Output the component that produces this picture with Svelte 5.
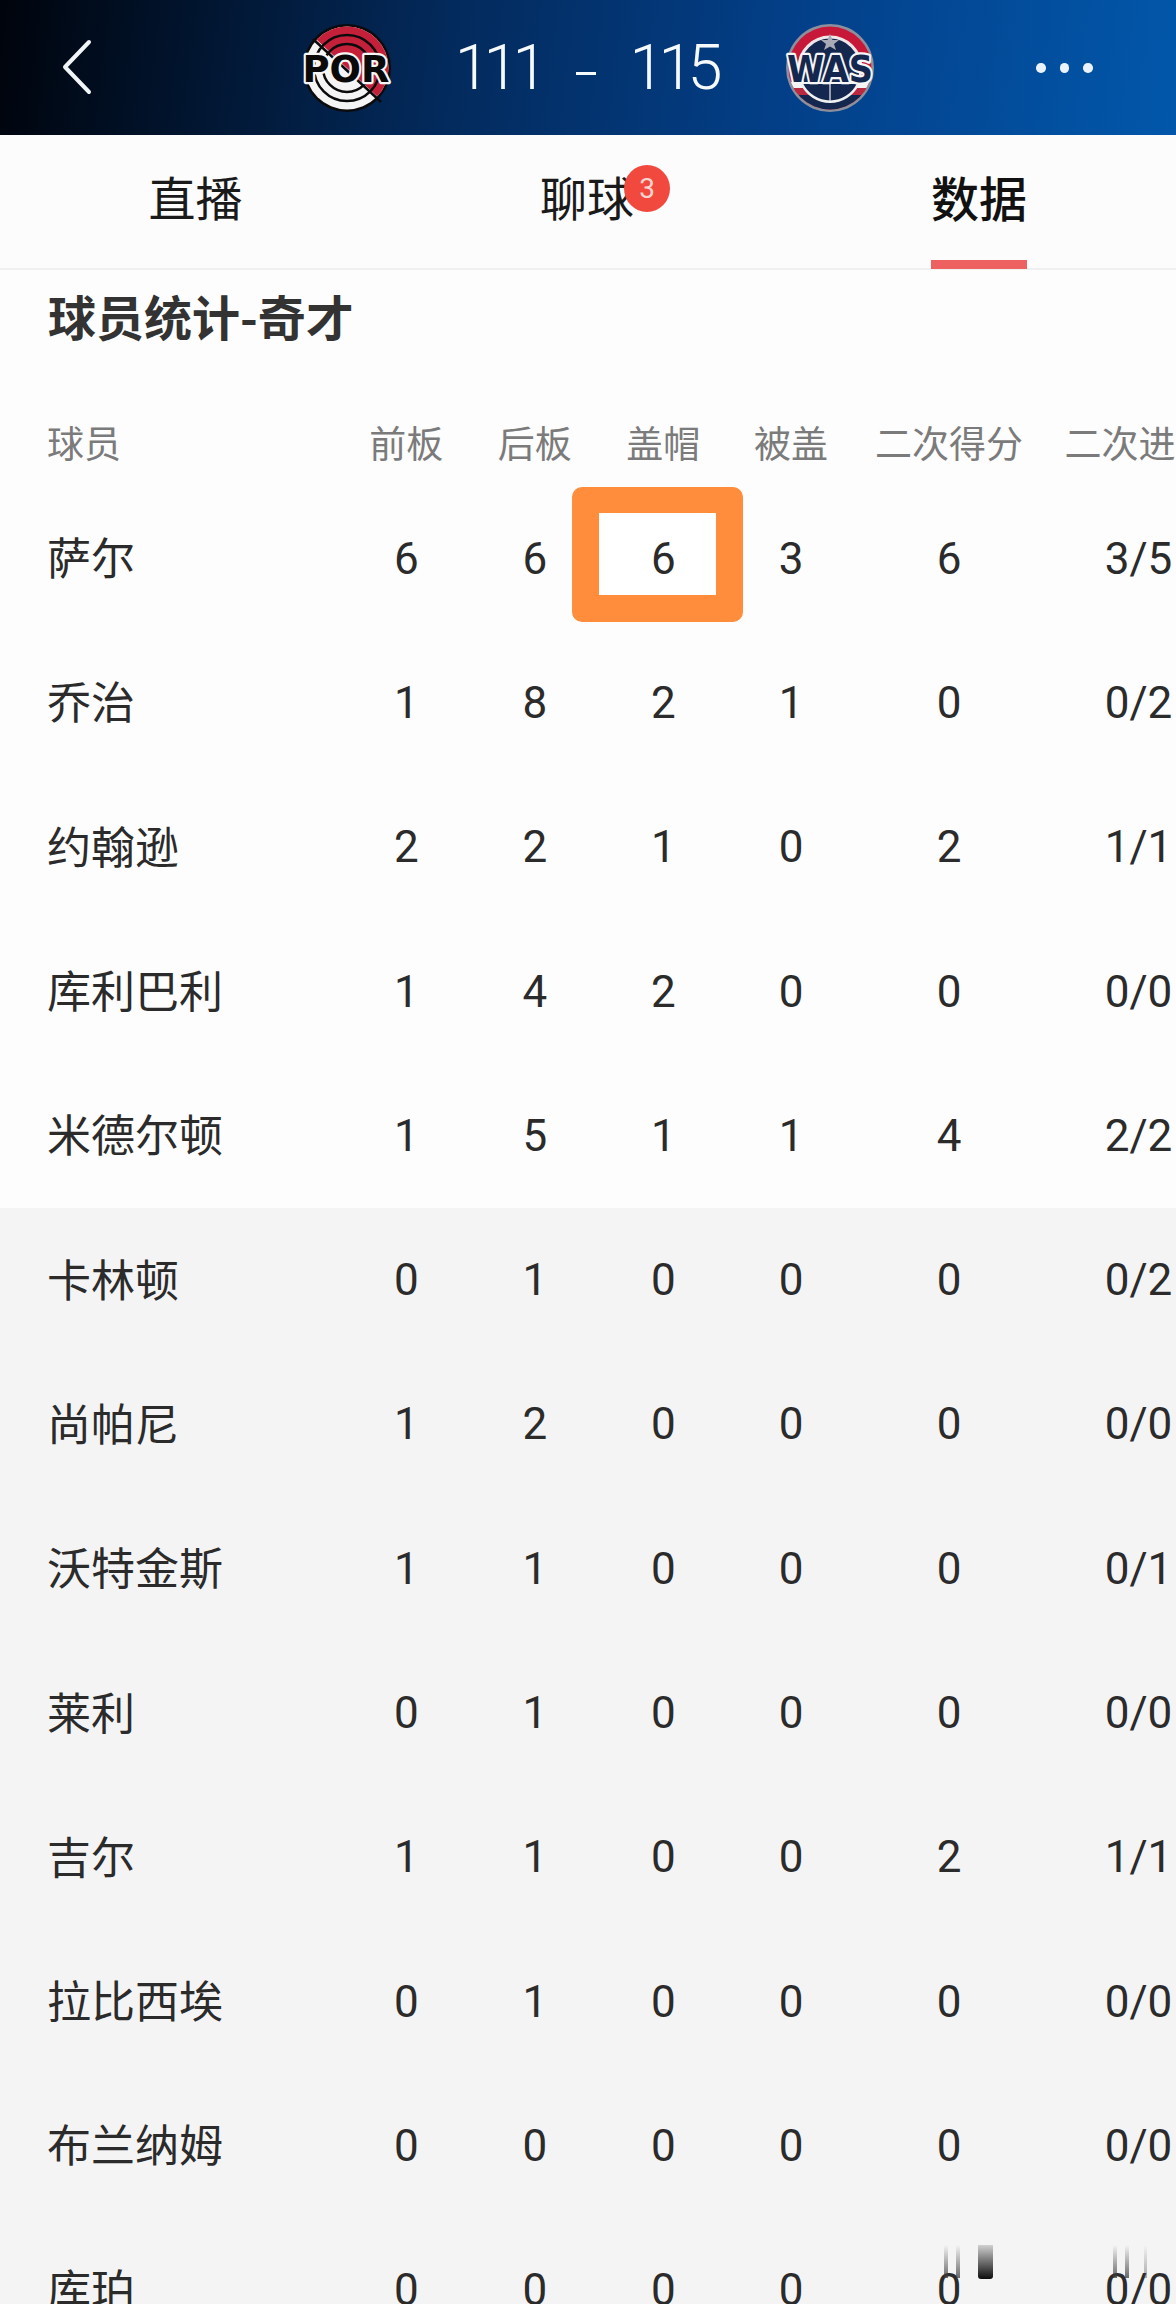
<script lang="ts">
	const columns = ['前板', '后板', '盖帽', '被盖', '二次得分', '二次进球'];

	const players = [
		{ name: '萨尔', stats: ['6', '6', '6', '3', '6', '3/5'] },
		{ name: '乔治', stats: ['1', '8', '2', '1', '0', '0/2'] },
		{ name: '约翰逊', stats: ['2', '2', '1', '0', '2', '1/1'] },
		{ name: '库利巴利', stats: ['1', '4', '2', '0', '0', '0/0'] },
		{ name: '米德尔顿', stats: ['1', '5', '1', '1', '4', '2/2'] },
		{ name: '卡林顿', stats: ['0', '1', '0', '0', '0', '0/2'] },
		{ name: '尚帕尼', stats: ['1', '2', '0', '0', '0', '0/0'] },
		{ name: '沃特金斯', stats: ['1', '1', '0', '0', '0', '0/1'] },
		{ name: '莱利', stats: ['0', '1', '0', '0', '0', '0/0'] },
		{ name: '吉尔', stats: ['1', '1', '0', '0', '2', '1/1'] },
		{ name: '拉比西埃', stats: ['0', '1', '0', '0', '0', '0/0'] },
		{ name: '布兰纳姆', stats: ['0', '0', '0', '0', '0', '0/0'] },
		{ name: '库珀', stats: ['0', '0', '0', '0', '0', '0/0'] }
	];

	// first five players are the starters, the rest sit on the grey background
	const starters = 5;
</script>

<div class="page">
	<header class="topbar">
		<svg class="back" width="32" height="56" viewBox="0 0 32 56">
			<path d="M28 3 L4 28 L28 53" fill="none" stroke="#f2f5f8" stroke-width="4" stroke-linecap="round" stroke-linejoin="round" />
		</svg>

		<div class="scoreline">
			<svg class="logo" width="92" height="92" viewBox="0 0 92 92">
				<defs>
					<clipPath id="por-top"><polygon points="0,0 92,0 92,78 80,78 16,18 10,0" /></clipPath>
				</defs>
				<circle cx="46" cy="46" r="44" fill="#0b0b0d" />
				<circle cx="46" cy="46" r="41.5" fill="#f4f4f4" />
				<g clip-path="url(#por-top)">
					<circle cx="46" cy="46" r="41.5" fill="#c5203a" />
				</g>
				<circle cx="46" cy="46" r="33" fill="none" stroke="#0b0b0d" stroke-width="2.5" />
				<circle cx="46" cy="46" r="24" fill="none" stroke="#0b0b0d" stroke-width="2.5" />
				<path d="M12 17 L80 80" stroke="#0b0b0d" stroke-width="2.5" />
				<text class="logo-text" x="45" y="60" text-anchor="middle" textLength="87" lengthAdjust="spacingAndGlyphs" fill="#0a0a0a" stroke="#f6f6f6">POR</text>
			</svg>

			<div class="score">
				<span>111</span>
				<i class="dash"></i>
				<span>115</span>
			</div>

			<svg class="logo" width="92" height="92" viewBox="0 0 92 92">
				<defs>
					<clipPath id="was-disc"><circle cx="46" cy="46" r="41.5" /></clipPath>
				</defs>
				<circle cx="46" cy="46" r="44" fill="#8c8f9c" />
				<g clip-path="url(#was-disc)">
					<rect width="92" height="92" fill="#c8183a" />
					<circle cx="46" cy="46" r="31" fill="#14284f" stroke="#f0e6e8" stroke-width="3" />
					<rect y="60" width="92" height="6" fill="#f4f4f4" />
					<rect y="66" width="92" height="7" fill="#b9293f" />
					<path d="M0 73 H92 V92 H0 Z" fill="#14284f" />
					<path d="M18 62 A31 31 0 0 0 74 62" fill="#14284f" stroke="#f0f0f0" stroke-width="2.5" />
					<path d="M46 60 V80" stroke="#f0f0f0" stroke-width="1.2" />
				</g>
				<polygon points="46,12 48.5,18 55,18 50,22 52,28 46,24.500 40,28 42,22 37,18 43.500,18" fill="#a9acb6" />
				<text class="logo-text" x="46" y="60" text-anchor="middle" textLength="86" lengthAdjust="spacingAndGlyphs" fill="#14284f" stroke="#f6f6f6">WAS</text>
			</svg>
		</div>

		<div class="more">
			<i></i><i></i><i></i>
		</div>
	</header>

	<nav class="tabs">
		<div class="tab">直播</div>
		<div class="tab">
			<span class="tab-label">
				聊球
				<b class="badge">3</b>
			</span>
		</div>
		<div class="tab active">
			<span class="tab-label">数据</span>
		</div>
	</nav>

	<h2 class="title">球员统计-奇才</h2>

	<div class="row head">
		<div class="name">球员</div>
		{#each columns as col}
			<div class="cell">{col}</div>
		{/each}
	</div>

	{#each players as p, i}
		<div class="row" class:bench={i >= starters}>
			<div class="name">{p.name}</div>
			{#each p.stats as s, j}
				<div class="cell">
					{#if i === 0 && j === 2}
						<span class="mark"></span>
					{/if}
					<span class="val">{s}</span>
				</div>
			{/each}
		</div>
	{/each}

	<div class="watermark">
		<i style="left: 944px; width: 4px;"></i>
		<i style="left: 956px; width: 4px;"></i>
		<i class="wide" style="left: 978px; width: 15px;"></i>
		<i style="left: 1113px; width: 4px;"></i>
		<i style="left: 1125px; width: 4px;"></i>
		<i class="light" style="left: 1144px; width: 3px;"></i>
	</div>
</div>

<style>
	:global(body) {
		margin: 0;
		background: #fdfdfd;
	}

	.page {
		position: relative;
		width: 1176px;
		height: 2304px;
		overflow: hidden;
		background: #fdfdfd;
		color: #2b2b2b;
		font-family: Roboto, 'Noto Sans CJK SC', sans-serif;
	}

	.topbar {
		height: 135px;
		display: flex;
		align-items: center;
		position: relative;
		background: linear-gradient(97deg, #00040c 0%, #032a5c 38%, #03408a 68%, #0257aa 100%);
	}

	.back {
		margin-left: 61px;
		margin-top: -2px;
	}

	.scoreline {
		position: absolute;
		left: 301px;
		top: 22px;
		display: flex;
		align-items: center;
	}

	.logo {
		flex-shrink: 0;
		display: block;
	}

	.logo-text {
		font-family: 'DejaVu Sans', sans-serif;
		font-size: 38px;
		font-weight: 700;
		stroke-width: 4.5px;
		paint-order: stroke;
		stroke-linejoin: round;
	}

	.score {
		box-sizing: border-box;
		width: 391px;
		padding-right: 6px;
		display: flex;
		align-items: center;
		justify-content: center;
		gap: 34px;
		font-size: 63px;
		font-weight: 300;
		letter-spacing: -6px;
		color: #f6fafd;
		line-height: 92px;
	}

	.dash {
		width: 20px;
		height: 3px;
		margin-top: 10px;
		background: #f6fafd;
	}

	.more {
		position: absolute;
		left: 1036px;
		top: 63px;
		display: flex;
		gap: 14px;
	}

	.more i {
		width: 9.500px;
		height: 9.500px;
		border-radius: 50%;
		background: #eaf2fa;
	}

	.tabs {
		height: 133px;
		display: grid;
		grid-template-columns: 391px 392px 392px;
		border-bottom: 2px solid #f0f0f1;
		background: #fcfcfd;
		font-family: 'Noto Sans CJK SC', sans-serif;
		font-size: 47px;
		color: #1a1a1a;
	}

	.tab {
		display: flex;
		justify-content: center;
		align-items: center;
		position: relative;
		line-height: 66px;
		padding-bottom: 12px;
		height: 121px;
	}

	.tab-label {
		position: relative;
	}

	.tab.active {
		font-size: 48px;
		font-weight: 500;
		color: #111;
	}

	.tab.active .tab-label::after {
		content: '';
		position: absolute;
		left: 0;
		right: 0;
		top: 97px;
		height: 9px;
		background: #ee6161;
	}

	.badge {
		position: absolute;
		left: 84px;
		top: 2px;
		width: 46px;
		height: 47px;
		border-radius: 50%;
		background: #f2493f;
		color: #fbd5d0;
		font-family: Roboto, sans-serif;
		font-weight: 400;
		font-size: 28px;
		line-height: 47px;
		text-align: center;
	}

	.title {
		margin: 0;
		padding: 15px 0 0 48px;
		height: 65px;
		line-height: 60px;
		font-family: 'Noto Sans CJK SC', sans-serif;
		font-size: 48px;
		font-weight: 700;
		color: #333;
	}

	.row {
		display: grid;
		grid-template-columns: 342px 128.500px 128.500px 128.500px 127px 189px 190px;
		height: 144.300px;
		align-items: center;
		font-size: 44px;
		font-family: Roboto, 'Noto Sans CJK SC', sans-serif;
	}

	.row.head {
		height: 88.500px;
		padding-top: 48px;
		font-size: 37px;
		color: #7b7b7b;
	}

	.row.bench {
		background: #f4f4f4;
	}

	.name {
		padding-left: 47px;
		white-space: nowrap;
	}

	.row:not(.head) .name {
		font-size: 44px;
		padding-bottom: 5px;
	}

	.cell {
		position: relative;
		text-align: center;
		white-space: nowrap;
	}

	.val {
		position: relative;
	}

	.mark {
		position: absolute;
		box-sizing: border-box;
		left: -27px;
		top: -46px;
		width: 171px;
		height: 135px;
		border: 27.500px solid #ff8d3b;
		border-top-width: 26px;
		border-bottom-width: 27px;
		border-radius: 10px;
		background: #fff;
	}

	.watermark {
		position: absolute;
		inset: 0;
		pointer-events: none;
	}

	.watermark i {
		position: absolute;
		top: 2245px;
		height: 33px;
		background: linear-gradient(180deg, rgba(60, 60, 60, 0), rgba(60, 60, 60, 0.75));
	}

	.watermark i.wide {
		height: 34px;
		border-radius: 0 0 3px 3px;
		background: linear-gradient(180deg, rgba(0, 0, 0, 0.15), rgba(0, 0, 0, 0.95));
	}

	.watermark i.light {
		background: linear-gradient(180deg, rgba(60, 60, 60, 0), rgba(60, 60, 60, 0.4));
	}
</style>
